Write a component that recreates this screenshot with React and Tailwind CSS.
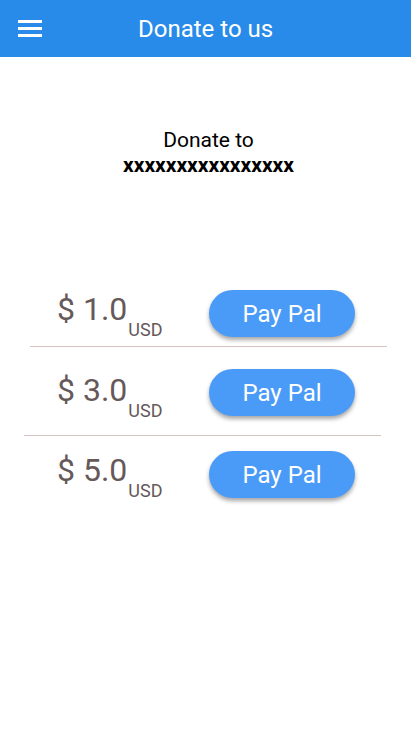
import React from "react"

const rows = [
  { amount: "1.0", rowClass: "mt-[112px]", offset: "mt-[3px]", line: "ml-[30px] mt-[9px]" },
  { amount: "3.0", rowClass: "mt-[22px]", offset: "mt-[5px]", line: "ml-[24px] mt-[19px]" },
  { amount: "5.0", rowClass: "mt-[15px]", offset: "mt-[3px]", line: null },
]

function PriceRow({ amount, rowClass, offset, line }) {
  return (
    <div>
      <div className={`flex h-[47px] items-start ${rowClass}`}>
        <div className={`ml-[57px] flex w-[152px] items-start text-[#655959] ${offset}`}>
          <span className="text-[32px] leading-none">$ {amount}</span>
          <span className="mt-[28px] ml-px text-[18px] leading-none">USD</span>
        </div>
        <button className="h-[47px] w-[146px] rounded-full bg-[#4a9bf8] text-[24px] text-white shadow-[0_3px_4px_rgba(0,0,0,0.35)]">
          Pay Pal
        </button>
      </div>
      {line && <div className={`h-px w-[357px] bg-[#d6c4c1] ${line}`} />}
    </div>
  )
}

export default function App() {
  return (
    <div className="min-h-[731px] w-[411px] bg-white font-['Roboto',sans-serif]">
      <div className="flex h-[57px] items-center bg-[#288be9]">
        <div className="ml-[18px] flex w-[24px] flex-col gap-[4px]">
          <span className="h-[3px] bg-white" />
          <span className="h-[3px] bg-white" />
          <span className="h-[3px] bg-white" />
        </div>
        <h1 className="ml-[96px] text-[24px] text-white">Donate to us</h1>
      </div>

      <div className="mt-[71px] flex flex-col items-center pl-[6px] text-black">
        <p className="text-[21px] leading-[25px]">Donate to</p>
        <p className="text-[21px] font-bold leading-[25px]">xxxxxxxxxxxxxxxx</p>
      </div>

      {rows.map((row) => (
        <PriceRow key={row.amount} {...row} />
      ))}
    </div>
  )
}
